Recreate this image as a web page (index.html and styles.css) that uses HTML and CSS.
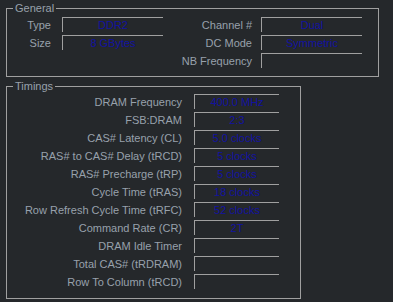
FILE: index.html
```
<!DOCTYPE html>
<html lang="en">
<head>
    <meta charset="UTF-8">
    <meta name="viewport" content="width=device-width, initial-scale=1.0">
    <title>Memory</title>
    <link rel="stylesheet" href="styles.css">
</head>
<body>
    <fieldset class="group general">
        <legend>General</legend>
        <div class="grid">
            <span class="label">Type</span>
            <span class="field">DDR2</span>
            <span class="label right">Channel #</span>
            <span class="field">Dual</span>

            <span class="label">Size</span>
            <span class="field">8 GBytes</span>
            <span class="label right">DC Mode</span>
            <span class="field">Symmetric</span>

            <span class="label"></span>
            <span class="blank"></span>
            <span class="label right">NB Frequency</span>
            <span class="field"></span>
        </div>
    </fieldset>

    <fieldset class="group timings">
        <legend>Timings</legend>
        <div class="grid">
            <span class="label">DRAM Frequency</span>
            <span class="field">400.0 MHz</span>
            <span class="label">FSB:DRAM</span>
            <span class="field">2:3</span>
            <span class="label">CAS# Latency (CL)</span>
            <span class="field">5.0 clocks</span>
            <span class="label">RAS# to CAS# Delay (tRCD)</span>
            <span class="field">5 clocks</span>
            <span class="label">RAS# Precharge (tRP)</span>
            <span class="field">5 clocks</span>
            <span class="label">Cycle Time (tRAS)</span>
            <span class="field">18 clocks</span>
            <span class="label">Row Refresh Cycle Time (tRFC)</span>
            <span class="field">52 clocks</span>
            <span class="label">Command Rate (CR)</span>
            <span class="field">2T</span>
            <span class="label">DRAM Idle Timer</span>
            <span class="field"></span>
            <span class="label">Total CAS# (tRDRAM)</span>
            <span class="field"></span>
            <span class="label">Row To Column (tRCD)</span>
            <span class="field"></span>
        </div>
    </fieldset>
</body>
</html>
```

FILE: styles.css
```
body {
    margin: 0;
    background: #25282b;
    font-family: "Liberation Sans", Arial, sans-serif;
    font-size: 11px;
    color: #98a1ab;
}
.group {
    margin: 0 0 0 6px;
    padding: 0;
    border: 1px solid #a0a0a0;
    min-inline-size: 0;
    box-sizing: border-box;
}
.group legend {
    margin-left: 6px;
    padding: 0 2px;
    line-height: 12px;
    color: #98a1ab;
}
.general {
    margin-top: 2px;
    width: 373px;
    padding: 3px 0 8px 0;
}
.timings {
    margin-top: 3px;
    width: 295px;
    padding: 2px 0 9px 0;
}
.grid {
    display: grid;
    grid-auto-rows: 15px;
    row-gap: 3px;
}
.general .grid {
    grid-template-columns: 55px 101px 98px 101px;
}
.timings .grid {
    grid-template-columns: 187px 85px;
}
.label {
    text-align: right;
    padding-right: 11px;
    line-height: 14px;
    padding-top: 1px;
    white-space: nowrap;
}
.label.right {
    padding-right: 9px;
}
.timings .label {
    padding-right: 12px;
}
.field {
    border-top: 1px solid #a0a0a0;
    border-left: 1px solid #a0a0a0;
    color: #1212a0;
    text-align: center;
    line-height: 15px;
    white-space: nowrap;
}
```
